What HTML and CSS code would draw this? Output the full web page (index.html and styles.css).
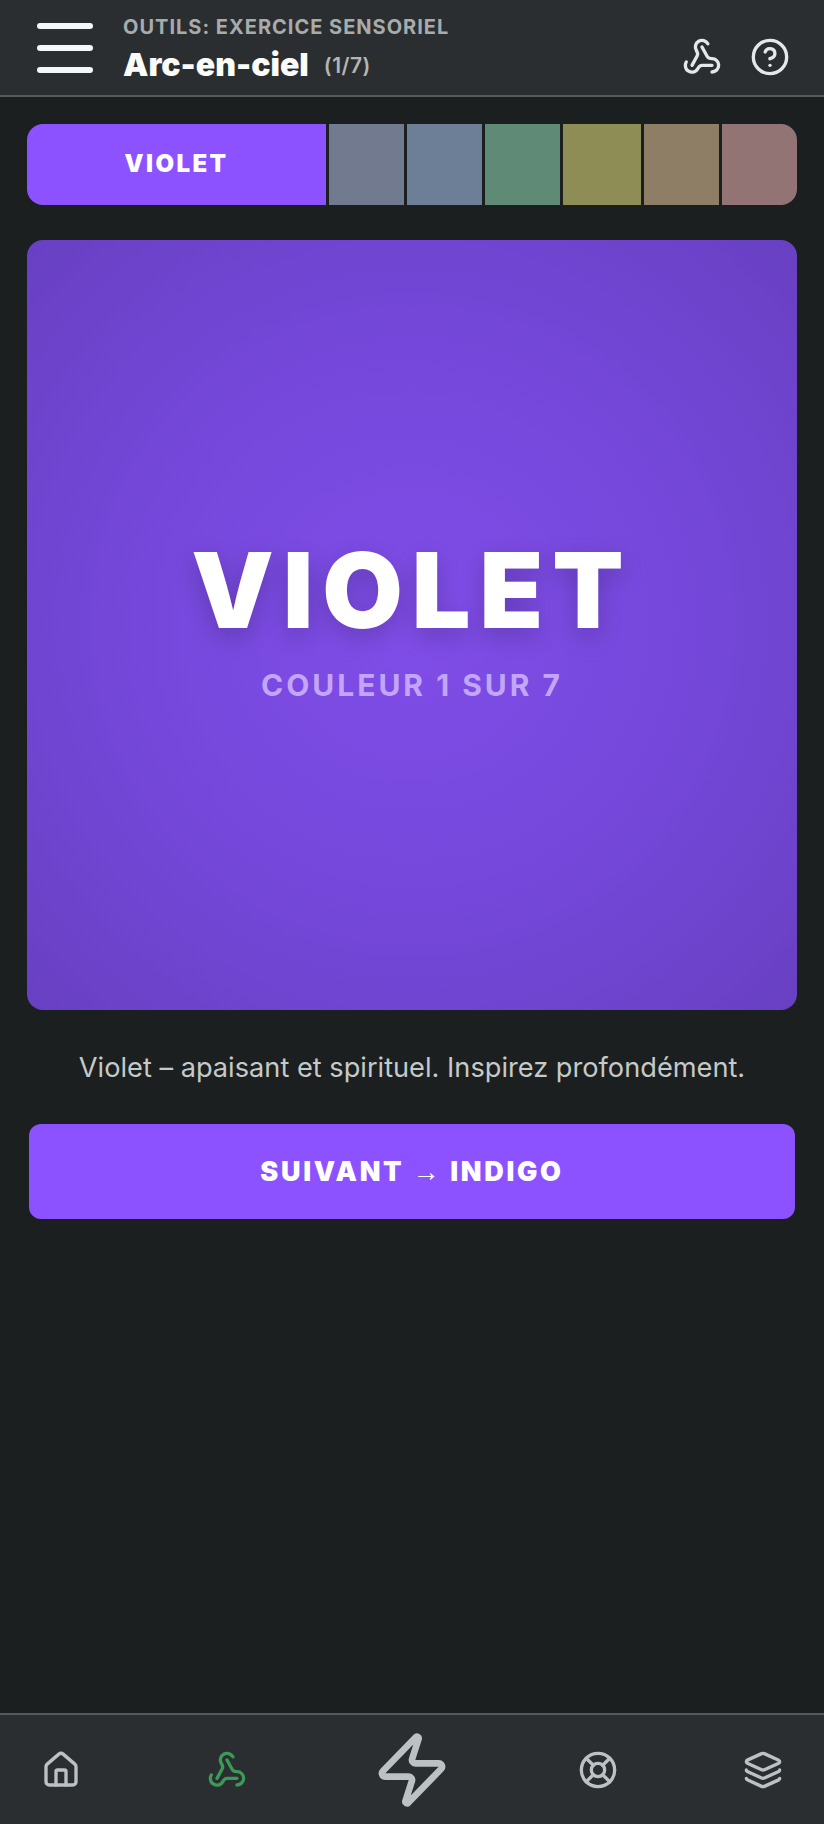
FILE: index.html
```html
<!DOCTYPE html>
<html lang="fr">
<head>
<meta charset="utf-8">
<title>Arc-en-ciel</title>
<link rel="stylesheet" href="styles.css">
</head>
<body>
<div class="app">
  <header class="topbar">
    <button class="menu" aria-label="Menu"><span></span><span></span><span></span></button>
    <div class="titles">
      <div class="eyebrow">OUTILS: EXERCICE SENSORIEL</div>
      <div class="title-row"><h1>Arc-en-ciel</h1><span class="count">(1/7)</span></div>
    </div>
    <div class="top-actions">
      <svg class="icon" viewBox="0 0 24 24"><path d="M18 16.98h-5.99c-1.1 0-1.95.94-2.48 1.9A4 4 0 0 1 2 17c.01-.7.2-1.4.57-2"/><path d="m6 17 3.13-5.78c.53-.97.1-2.18-.5-3.1a4 4 0 1 1 6.89-4.06"/><path d="m12 6 3.13 5.73C15.66 12.7 16.9 13 18 13a4 4 0 0 1 0 8"/></svg>
      <svg class="icon" viewBox="0 0 24 24"><circle cx="12" cy="12" r="10"/><path d="M9.09 9a3 3 0 0 1 5.83 1c0 2-3 3-3 3"/><path d="M12 17h.01"/></svg>
    </div>
  </header>

  <main class="content">
    <div class="strip">
      <div class="seg active">VIOLET</div>
      <div class="seg indigo"></div>
      <div class="seg blue"></div>
      <div class="seg green"></div>
      <div class="seg yellow"></div>
      <div class="seg orange"></div>
      <div class="seg red"></div>
    </div>
    <section class="card">
      <div class="card-name">VIOLET</div>
      <div class="card-sub">COULEUR 1 SUR 7</div>
    </section>
    <p class="desc">Violet – apaisant et spirituel. Inspirez profondément.</p>
    <button class="next">SUIVANT <span class="arrow">→</span> INDIGO</button>
  </main>

  <nav class="bottom">
    <svg class="icon nav" viewBox="0 0 24 24"><path d="M15 21v-8a1 1 0 0 0-1-1h-4a1 1 0 0 0-1 1v8"/><path d="M3 10a2 2 0 0 1 .709-1.528l7-6a2 2 0 0 1 2.582 0l7 6A2 2 0 0 1 21 10v9a2 2 0 0 1-2 2H5a2 2 0 0 1-2-2z"/></svg>
    <svg class="icon nav on" viewBox="0 0 24 24"><path d="M18 16.98h-5.99c-1.1 0-1.95.94-2.48 1.9A4 4 0 0 1 2 17c.01-.7.2-1.4.57-2"/><path d="m6 17 3.13-5.78c.53-.97.1-2.18-.5-3.1a4 4 0 1 1 6.89-4.06"/><path d="m12 6 3.13 5.73C15.66 12.7 16.9 13 18 13a4 4 0 0 1 0 8"/></svg>
    <svg class="icon nav bolt" viewBox="0 0 24 24"><path d="M4 14a1 1 0 0 1-.78-1.63l9.9-10.2a.5.5 0 0 1 .86.46l-1.92 6.02A1 1 0 0 0 13 10h7a1 1 0 0 1 .78 1.63l-9.9 10.2a.5.5 0 0 1-.86-.46l1.92-6.02A1 1 0 0 0 11 14z"/></svg>
    <svg class="icon nav" viewBox="0 0 24 24"><circle cx="12" cy="12" r="10"/><circle cx="12" cy="12" r="4"/><path d="m4.93 4.93 4.24 4.24"/><path d="m14.83 9.17 4.24-4.24"/><path d="m14.83 14.83 4.24 4.24"/><path d="m9.17 14.83-4.24 4.24"/></svg>
    <svg class="icon nav" viewBox="0 0 24 24"><path d="M12.83 2.18a2 2 0 0 0-1.66 0L2.6 6.08a1 1 0 0 0 0 1.83l8.58 3.91a2 2 0 0 0 1.66 0l8.58-3.9a1 1 0 0 0 0-1.83z"/><path d="M2 12a1 1 0 0 0 .58.91l8.6 3.91a2 2 0 0 0 1.65 0l8.58-3.9A1 1 0 0 0 22 12"/><path d="M2 17a1 1 0 0 0 .58.91l8.6 3.91a2 2 0 0 0 1.65 0l8.58-3.9A1 1 0 0 0 22 17"/></svg>
  </nav>
</div>
</body>
</html>
```
FILE: styles.css
```css
* { box-sizing: border-box; }
html, body { margin: 0; height: 100%; }
body { background: #1b1f20; font-family: Inter, "Noto Sans", sans-serif; color: #fff; }
.app { width: 824px; height: 1824px; display: flex; flex-direction: column; }

.topbar { height: 97px; flex: none; background: #2a2e31; border-bottom: 2px solid #555a5c; display: flex; align-items: stretch; padding: 0 34px 0 37px; }
.menu { width: 56px; height: 50px; margin-top: 23px; padding: 0; background: none; border: 0; display: flex; flex-direction: column; justify-content: space-between; }
.menu span { display: block; height: 6px; border-radius: 3px; background: #f4f6f7; }
.titles { margin-left: 30px; padding-top: 15px; flex: 1; }
.eyebrow { font-size: 20px; line-height: 24px; font-weight: 700; letter-spacing: 1px; color: #a7acab; }
.title-row { display: flex; align-items: center; gap: 15px; margin-top: 7px; }
h1 { margin: 0; font-size: 32px; line-height: 38px; font-weight: 900; color: #fbfbf8; }
.count { font-size: 21px; font-weight: 600; letter-spacing: .5px; color: #b4b6b2; }
.top-actions { display: flex; align-items: center; gap: 28px; padding-top: 19px; }

.icon { width: 40px; height: 40px; fill: none; stroke: #e4e8e8; stroke-width: 2; stroke-linecap: round; stroke-linejoin: round; display: block; }

.content { flex: 1; padding: 27px 27px 0; display: flex; flex-direction: column; }
.strip { height: 81px; display: flex; gap: 3px; border-radius: 16px; overflow: hidden; }
.seg { flex: 1 1 0; }
.seg.active { flex: 0 0 299px; background: #8c52ff; display: flex; align-items: center; justify-content: center; font-size: 24px; font-weight: 900; letter-spacing: 2.4px; padding-bottom: 2px; }
.indigo { background: #727a90; }
.blue { background: #6d7f97; }
.green { background: #5f8b76; }
.yellow { background: #8f8d56; flex-grow: 1.03; }
.orange { background: #8f7e66; }
.red { background: #927475; }

.card { margin-top: 35px; height: 770px; padding-bottom: 18px; border-radius: 16px; background: radial-gradient(circle at center, #804de8 0%, #7548db 50%, #6840c2 100%); display: flex; flex-direction: column; align-items: center; justify-content: center; }
.card-name { font-size: 104px; line-height: 126px; font-weight: 900; letter-spacing: 9px; text-shadow: 0 8px 24px rgba(0,0,0,.2); }
.card-sub { margin-top: 12px; font-size: 30px; line-height: 40px; font-weight: 700; letter-spacing: 3px; color: #c3a6fb; }

.desc { margin: 38px 0 0; text-align: center; font-size: 27.2px; line-height: 40px; color: #c5cac8; }
.next { margin: 36px 2px 0; height: 95px; border: 0; border-radius: 12px; background: #8c52ff; color: #fff; font-family: inherit; font-size: 27px; font-weight: 900; letter-spacing: 2.7px; }
.arrow { font-family: "Liberation Serif", serif; font-weight: 400; }

.bottom { height: 111px; flex: none; background: #2a2e30; border-top: 2px solid #555a5c; display: flex; align-items: center; justify-content: space-between; padding: 0 41px; }
.nav { stroke: #bcc2c2; }
.nav.on { stroke: #3c9a58; }
.nav.bolt { width: 80px; height: 80px; }
```
